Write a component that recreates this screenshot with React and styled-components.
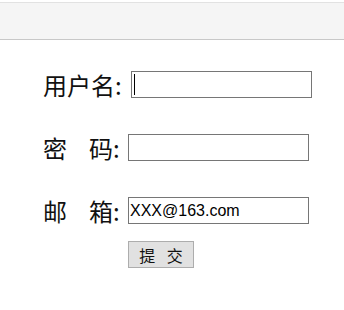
import styled, { createGlobalStyle } from 'styled-components'

const GlobalStyle = createGlobalStyle`
    html, body {
        margin:0;
        padding:0;
        background:#ffffff;
    }
`

const TopBar = styled.div`
    margin-top:2px;
    height:36px;
    background-color:#f5f5f5;
    border-top:1px solid #e2e2e2;
    border-bottom:1px solid #c8c8c8;
`

const Form = styled.form`
    display:flex;
    flex-direction:column;
    padding-top:31px;
    padding-left:43px;
`

const Row = styled.div`
    display:flex;
    flex-direction:row;
    align-items:center;
    height:27px;
    margin-bottom:${props => props.last ? '17px' : '36px'};
`

const Label = styled.label`
    display:flex;
    align-items:center;
    font-family:"Noto Sans CJK SC", sans-serif;
    font-size:24px;
    line-height:27px;
    color:#111111;
    width:${props => props.width}px;
`

const Spacer = styled.span`
    display:inline-block;
    width:22px;
`

const Field = styled.div`
    position:relative;
    display:flex;
`

const Input = styled.input`
    box-sizing:border-box;
    width:${props => props.w}px;
    height:27px;
    margin:0;
    padding:0 1px;
    border:1px solid #767676;
    border-radius:0;
    background:#ffffff;
    font-family:"Liberation Sans", Arial, sans-serif;
    font-size:16px;
    color:#000000;
    outline:none;
`

const Caret = styled.span`
    position:absolute;
    left:3px;
    top:3px;
    width:1px;
    height:21px;
    background:#000000;
`

const Button = styled.button`
    box-sizing:border-box;
    margin-left:85px;
    align-self:flex-start;
    width:66px;
    height:27px;
    padding:0;
    border:1px solid #adadad;
    border-radius:0;
    background-color:#e1e1e1;
    font-family:"Noto Sans CJK SC", sans-serif;
    font-size:16px;
    color:#111111;
    letter-spacing:4px;
    text-indent:4px;
`

const App = () => {
    return (
        <div>
            <GlobalStyle />
            <TopBar />
            <Form onSubmit={e => e.preventDefault()}>
                <Row>
                    <Label width={88}>用户名:</Label>
                    <Field>
                        <Input type="text" w={181} />
                        <Caret />
                    </Field>
                </Row>
                <Row>
                    <Label width={85}>密<Spacer />码:</Label>
                    <Input type="password" w={181} />
                </Row>
                <Row last>
                    <Label width={85}>邮<Spacer />箱:</Label>
                    <Input type="text" w={181} defaultValue="XXX@163.com" />
                </Row>
                <Button type="submit">提 交</Button>
            </Form>
        </div>
    )
}

export default App
